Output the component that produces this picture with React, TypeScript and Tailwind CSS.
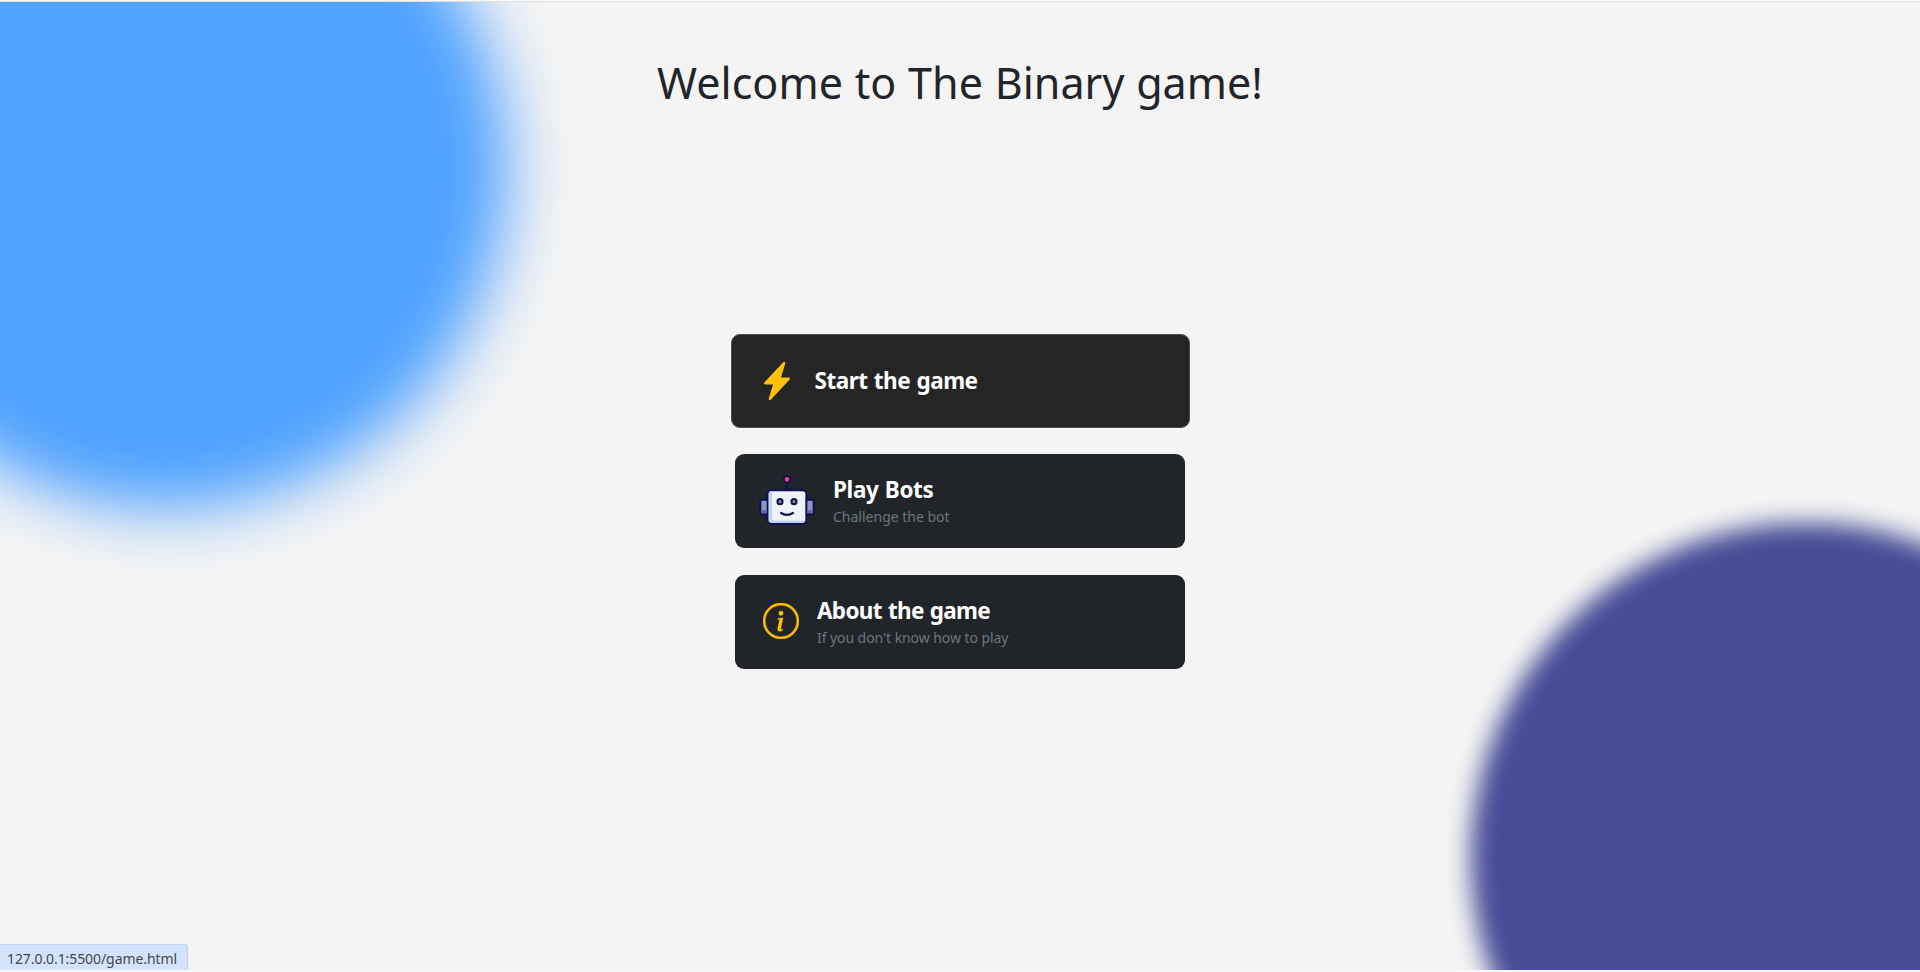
import type { ReactNode } from 'react';
import { BsInfoCircle, BsLightningChargeFill } from 'react-icons/bs';

function RobotIcon() {
  return (
    <svg viewBox="21 24 168 156" className="mb-[3px] h-[52px] w-14" fill="none">
      <g stroke="#0b0f5c" strokeWidth="6" strokeLinecap="round" strokeLinejoin="round">
        <path d="M105 52v20" />
        <circle cx="105" cy="40" r="10" fill="#ff3b64" />
        <rect x="25" y="101" width="24" height="44" rx="5" fill="#8f95bd" />
        <rect x="161" y="101" width="24" height="44" rx="5" fill="#8f95bd" />
        <rect x="47" y="73" width="116" height="100" rx="11" fill="#eef1fa" />
      </g>
      <path d="M50 82v80q0 8 8 8h94q6 0 8-8-3 2-8 2H68q-8 0-8-8V76h-4q-6 0-6 6Z" fill="#c3d3ec" />
      <path d="M28 132h16v10H28zM166 132h16v10h-16z" fill="#666b99" />
      <g stroke="#14194f" strokeWidth="6.5" strokeLinecap="round">
        <circle cx="84" cy="107" r="7.5" fill="#8f95bd" />
        <circle cx="126" cy="107" r="7.5" fill="#8f95bd" />
        <path d="M87 141q18 11 36 0" />
      </g>
    </svg>
  );
}

interface MenuCardProps {
  icon: ReactNode;
  children: ReactNode;
  className: string;
}

function MenuCard({ icon, children, className }: MenuCardProps) {
  return (
    <button className={`flex h-[94px] items-center rounded-[9px] text-left ${className}`}>
      {icon}
      {children}
    </button>
  );
}

export default function App() {
  return (
    <div className="relative flex h-[972px] flex-col overflow-hidden bg-[#f8f8f8] font-['Noto_Sans',sans-serif]">
      <div className="relative mt-px h-[969px] overflow-hidden border-t border-[#dfe1df] bg-[#f4f4f4]">
        <div className="absolute -left-[176px] -top-[176px] size-[683px] rounded-full bg-[#4ea1ff] blur-[32px]" />
        <div className="absolute left-[1471px] top-[521px] size-[670px] rounded-full bg-[#464c96] blur-[12px]" />

        <main className="relative flex flex-col items-center">
          <h1 className="mt-[51px] h-[60px] whitespace-nowrap text-[43px] leading-[60px] tracking-[0.05px] text-[#212529] [word-spacing:0.5px]">
            Welcome to The Binary game!
          </h1>

          <div className="mt-[221px] flex flex-col items-center">
            <MenuCard
              className="w-[459px] border border-[#4a4f4f] bg-[#252525] pl-[26px]"
              icon={<BsLightningChargeFill className="mb-px size-[38px] text-[#ffc107]" />}
            >
              <h2 className="ml-[19px] text-[22.5px] font-bold leading-7 tracking-[-0.5px] text-white [word-spacing:1px]">
                Start the game
              </h2>
            </MenuCard>

            <MenuCard className="mt-[26px] w-[450px] bg-[#212529] pl-6" icon={<RobotIcon />}>
              <div className="ml-[18px]">
                <h2 className="pt-px text-[22.5px] font-bold leading-7 tracking-[-0.4px] text-white [word-spacing:1px]">Play Bots</h2>
                <p className="mt-[2px] text-[14px] leading-[21px] text-[#6c757d]">Challenge the bot</p>
              </div>
            </MenuCard>

            <MenuCard
              className="mt-[27px] w-[450px] bg-[#212529] pl-7"
              icon={<BsInfoCircle className="mb-[3px] size-[36px] stroke-[0.15] text-[#ffc107]" />}
            >
              <div className="ml-[18px]">
                <h2 className="pt-px text-[22.5px] font-bold leading-7 tracking-[-0.7px] text-white [word-spacing:1px]">
                  About the game
                </h2>
                <p className="mt-[2px] text-[14px] leading-[21px] tracking-[-0.07px] text-[#6c757d]">
                  If you don't know how to play
                </p>
              </div>
            </MenuCard>
          </div>
        </main>

        {/* link status bubble */}
        <div className="absolute bottom-0 left-0 h-[26px] w-[188px] rounded-tr-[4px] border-r border-t border-[#c9d2e0] bg-[#d3e3fd] pl-[7px] text-[14px] leading-[27px] tracking-[-0.08px] text-[#474747]">
          127.0.0.1:5500/game.html
        </div>
      </div>
    </div>
  );
}
